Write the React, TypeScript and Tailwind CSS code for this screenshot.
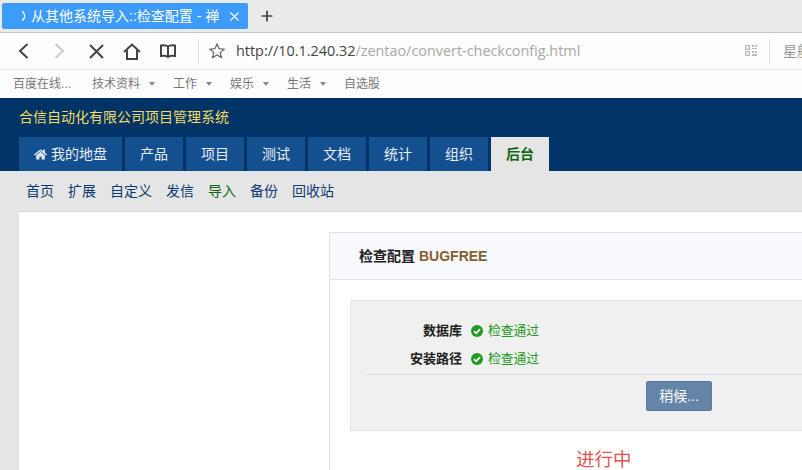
import { Plus } from "lucide-react";
import { FaHome } from "react-icons/fa";

const cjk = "font-['Liberation_Sans','Noto_Sans_CJK_SC',sans-serif]";

function Bookmark({ label, caret, w }: { label: string; caret?: boolean; w: string }) {
  return (
    <div className={`flex items-center shrink-0 ${w}`}>
      <span className="text-[12px] text-[#777]">{label}</span>
      {caret && <span className="ml-[9px] w-0 h-0 border-x-[3.5px] border-x-transparent border-t-[4px] border-t-[#888]" />}
    </div>
  );
}

function Check({ label, text }: { label: string; text: string }) {
  return (
    <div className="flex items-center h-[28px]">
      <span className="w-[96px] text-right text-[13px] font-bold text-[#222]">{label}</span>
      <svg viewBox="0 0 12 12" className="ml-[9px] w-[12px] h-[12px] shrink-0">
        <circle cx="6" cy="6" r="6" fill="#229922" />
        <path d="M3 6.2 5.2 8.3 9 4.2" fill="none" stroke="#fff" strokeWidth="1.8" />
      </svg>
      <span className="ml-[5px] text-[12.75px] text-[#229922]">{text}</span>
    </div>
  );
}

export default function App() {
  const tabs = ["产品", "项目", "测试", "文档", "统计", "组织"];
  const subs = ["首页", "扩展", "自定义", "发信", "导入", "备份", "回收站"];
  return (
    <div className={`w-[802px] h-[470px] overflow-hidden bg-white flex flex-col ${cjk}`}>
      {/* tab strip */}
      <div className="h-[33px] shrink-0 bg-[#ebebeb] border-b border-[#c6c6c6] flex items-start pt-[3px] pl-[2px]">
        <div className="w-[246px] h-[26px] bg-[#3d9bfb] rounded-[2px] flex items-center text-white pl-[19px] pr-[9px]">
          <svg viewBox="0 0 6 10" className="w-[6px] h-[10px] shrink-0" fill="none" stroke="#fff" strokeWidth="1.2">
            <path d="M1 .5C4.5 2 4.5 8 1 9.5" />
          </svg>
          <span className="ml-[4px] text-[14px] whitespace-nowrap overflow-hidden w-[190px]">从其他系统导入::检查配置 - 禅</span>
          <svg viewBox="0 0 9 9" className="ml-auto w-[9px] h-[9px]" fill="none" stroke="#fff" strokeWidth="1.1">
            <path d="M.5.5l8 8M8.5.5l-8 8" />
          </svg>
        </div>
        <Plus size={16} strokeWidth={2.6} className="ml-[11px] mt-[5px] text-[#444]" />
      </div>
      {/* address bar */}
      <div className="h-[37px] shrink-0 border-b border-[#e6e6e6] bg-[#fdfdfd] flex items-center">
        <svg viewBox="0 0 11 16" className="ml-[18px] w-[11px] h-[16px] shrink-0" fill="none" stroke="#444" strokeWidth="2">
          <path d="M9.5 1 2 8l7.5 7" />
        </svg>
        <svg viewBox="0 0 11 16" className="ml-[25px] w-[11px] h-[16px] shrink-0" fill="none" stroke="#ccc" strokeWidth="2">
          <path d="M1.5 1 9 8l-7.5 7" />
        </svg>
        <svg viewBox="0 0 15 15" className="ml-[24px] w-[15px] h-[15px] shrink-0" fill="none" stroke="#444" strokeWidth="2">
          <path d="M1 1l13 13M14 1 1 14" />
        </svg>
        <svg viewBox="0 0 18 17" className="ml-[19px] w-[18px] h-[17px] shrink-0" fill="none" stroke="#444" strokeWidth="2">
          <path d="M1 9 9 1.5 17 9M4 7v9h10V7" />
        </svg>
        <svg viewBox="0 0 16 15" className="ml-[19px] w-[16px] h-[15px] shrink-0" fill="none" stroke="#444" strokeWidth="2">
          <path d="M8 2.500C6 1 3 1 1 1.500v10.500c2-.4 5-.4 7 1 2-1.400 5-1.400 7-1V1.500C13 1 10 1 8 2.500zM8 2.500V13" />
        </svg>
        <div className="ml-[22px] w-px h-[25px] bg-[#ddd] shrink-0" />
        <svg viewBox="0 0 16 16" className="ml-[10px] w-[16px] h-[16px] shrink-0" fill="none" stroke="#666" strokeWidth="1.2">
          <path d="M8 1l2.100 4.700 5 .5-3.800 3.400 1.100 5L8 12l-4.400 2.600 1.100-5L.9 6.200l5-.5z" />
        </svg>
        <span className="ml-[11px] flex-1 min-w-0 font-['Open_Sans',sans-serif] text-[14.4px] text-[#444] whitespace-nowrap">
          http://10.1.240.32<span className="text-[#a8a8a8]">/zentao/convert-checkconfig.html</span>
        </span>
        <svg viewBox="0 0 12 12" className="w-[12px] h-[12px] shrink-0" fill="#bbb">
          <path d="M0 0h5v5H0zM1.300 1.300v2.400h2.400V1.300zM7 0h2v2H7zM10 0h2v2h-2zM7 3h5v1H7zM0 6h5v5H0zM1.300 7.300v2.400h2.400V7.300zM7 6h2v2H7zM10 6h2v2h-2zM7 9h5v2H7z" fillRule="evenodd" />
        </svg>
        <div className="ml-[12px] w-px h-[25px] bg-[#ddd] shrink-0" />
        <span className="ml-[13px] w-[19px] overflow-hidden shrink-0 text-[14px] text-[#999] whitespace-nowrap">星舰</span>
      </div>
      {/* bookmarks */}
      <div className="h-[28px] shrink-0 bg-[#fdfdfd] flex items-center pl-[13px]">
        <Bookmark label="百度在线..." w="w-[79px]" />
        <Bookmark label="技术资料" caret w="w-[81px]" />
        <Bookmark label="工作" caret w="w-[57px]" />
        <Bookmark label="娱乐" caret w="w-[57px]" />
        <Bookmark label="生活" caret w="w-[57px]" />
        <Bookmark label="自选股" w="w-[50px]" />
      </div>
      {/* app header */}
      <div className="h-[73px] shrink-0 bg-[#003366] pl-[19px] flex flex-col">
        <div className="h-[39px] flex items-center text-[14px] text-[#f0dc64]">合信自动化有限公司项目管理系统</div>
        <div className="flex gap-[3px] h-[34px]">
          <div className="w-[103px] bg-[#14508f] text-[#e8eef5] text-[14px] flex items-center justify-center gap-[4px]">
            <FaHome size={13} className="text-[#dde6f0]" />
            我的地盘
          </div>
          {tabs.map((t) => (
            <div key={t} className="w-[58px] bg-[#14508f] text-[#e8eef5] text-[14px] flex items-center justify-center">{t}</div>
          ))}
          <div className="w-[58px] bg-[#e5e5e5] text-[#116611] font-bold text-[14px] flex items-center justify-center">后台</div>
        </div>
      </div>
      {/* subnav */}
      <div className="h-[40px] shrink-0 bg-[#e5e5e5] pl-[26px] flex items-center gap-[14px]">
        {subs.map((s) => (
          <span key={s} className={`text-[14px] ${s === "导入" ? "text-[#116611]" : "text-[#0d3a70]"}`}>{s}</span>
        ))}
      </div>
      {/* page */}
      <div className="flex-1 bg-[#e5e5e5] pl-[19px]">
        <div className="h-full bg-white border-t border-[#dcdcdc] pl-[310px] pt-[20px]">
          <div className="border border-[#e0e0e0] border-r-0 h-[300px]">
            <div className="h-[47px] bg-[#f8f9fd] border-b border-[#e2e2e2] flex items-center pl-[29px]">
              <span className="text-[14px] font-bold text-[#222]">检查配置</span>
              <span className="ml-[4px] text-[14px] font-bold text-[#85602f]">BUGFREE</span>
            </div>
            <div className="pl-[20px] pt-[20px]">
              <div className="h-[131px] bg-[#f0f0f0] border border-[#e2e2e2] border-r-0 pl-[15px] pt-[16px]">
                <Check label="数据库" text="检查通过" />
                <Check label="安装路径" text="检查通过" />
                <div className="border-t border-[#dcdcdc] mt-[1px] flex pt-[6px] pl-[280px]">
                  <div className="w-[66px] h-[30px] rounded-[2px] bg-[#6484a8] border border-[#5a7a9e] text-white text-[14px] flex items-center justify-center">稍候...</div>
                </div>
              </div>
              <div className="mt-[15px] pl-[226px] text-[18.5px] text-[#dd5450]">进行中</div>
            </div>
          </div>
        </div>
      </div>
    </div>
  );
}
